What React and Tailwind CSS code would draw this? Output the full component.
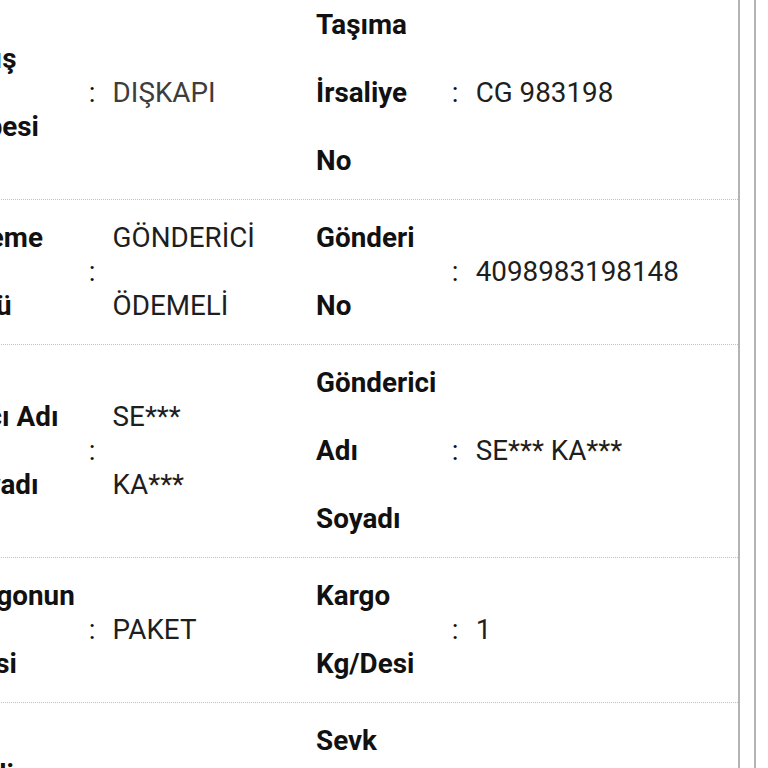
const rows = [
  {
    left: { label: ["Çıkış", "Şubesi"], value: ["DIŞKAPI"], muted: true },
    right: { label: ["Taşıma", "İrsaliye", "No"], value: ["CG 983198"] },
  },
  {
    left: { label: ["Ödeme", "Türü"], value: ["GÖNDERİCİ", "ÖDEMELİ"] },
    right: { label: ["Gönderi", "No"], value: ["4098983198148"] },
  },
  {
    left: { label: ["Alıcı Adı", "Soyadı"], value: ["SE***", "KA***"] },
    right: { label: ["Gönderici", "Adı", "Soyadı"], value: ["SE*** KA***"] },
  },
  {
    left: { label: ["Kargonun", "Cinsi"], value: ["PAKET"] },
    right: { label: ["Kargo", "Kg/Desi"], value: ["1"] },
  },
  {
    left: { label: ["Teslim", "Şekli"], value: ["ADRES"] },
    right: { label: ["Sevk", "Tarihi", "Saati"], value: ["12.03.2024"] },
  },
];

function Cell({ label, value, muted, labelW, valueW }) {
  return (
    <>
      <div className={`${labelW} font-bold text-[#111]`}>
        {label.map((line, i) => (
          <div key={i}>{line}</div>
        ))}
      </div>
      <div className="w-[27px] pl-[3px] text-[#111]">:</div>
      <div className={`${valueW} ${muted ? "text-[#3d3d3d]" : "text-[#1e1e1e]"}`}>
        {value.map((line, i) => (
          <div key={i}>{line}</div>
        ))}
      </div>
    </>
  );
}

export default function App() {
  return (
    <div
      className="min-h-screen max-h-screen bg-white overflow-hidden flex"
      style={{ fontFamily: "Roboto, 'Noto Sans', sans-serif" }}
    >
      <div className="-ml-[46px] w-[786px] shrink-0 border-r-2 border-[#b3b3b3]">
        <div className="-mt-[13px] text-[27.8px] leading-[68px]">
          {rows.map((row, i) => (
            <div
              key={i}
              className="flex items-center py-[4px] border-b border-dotted border-[#c2c2c2]"
            >
              <Cell {...row.left} labelW="w-[132px]" valueW="w-[204px]" />
              <Cell {...row.right} labelW="w-[133px]" valueW="w-[263px]" />
            </div>
          ))}
        </div>
      </div>
      <div className="w-[14px] shrink-0" />
      <div className="flex-1 border-l-2 border-[#b3b3b3]" />
    </div>
  );
}
